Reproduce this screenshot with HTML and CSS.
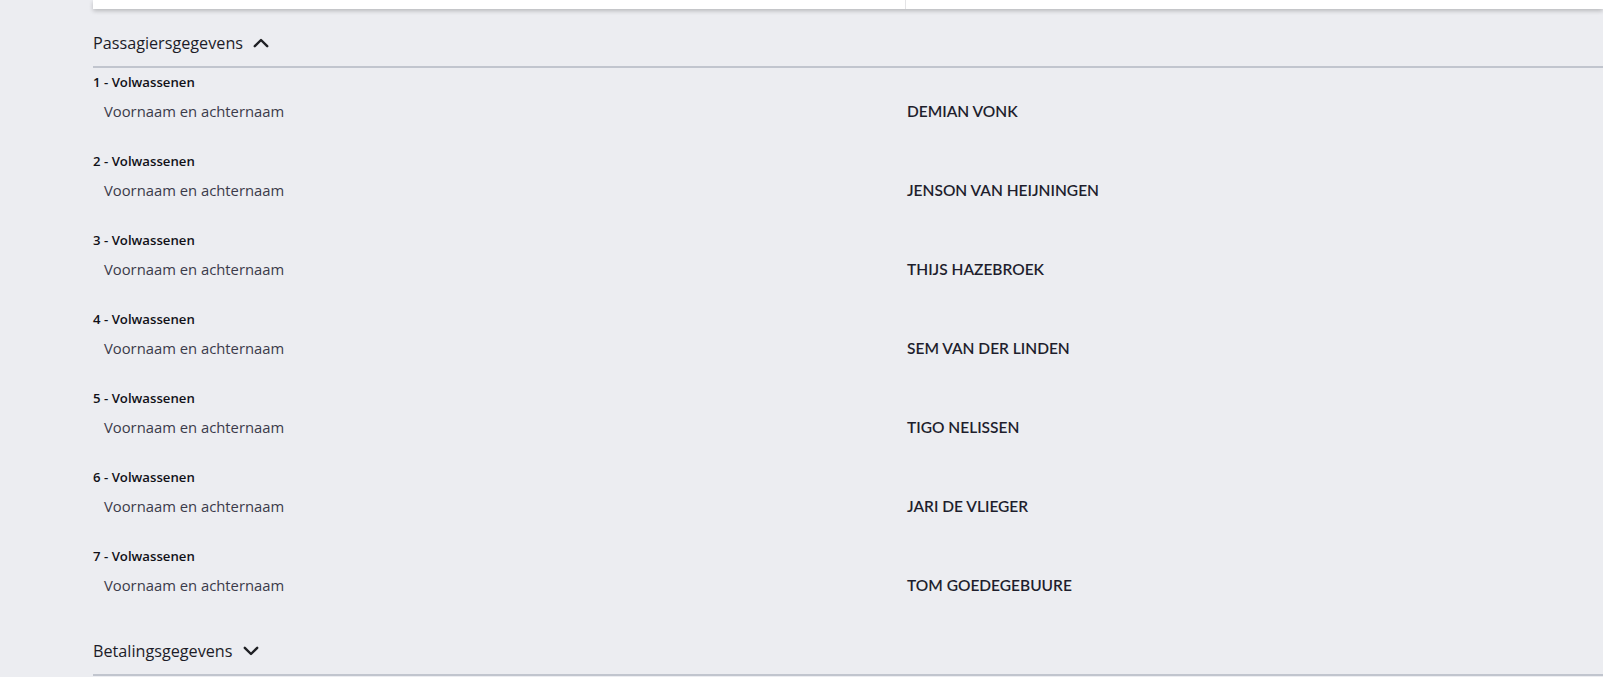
FILE: index.html
```html
<!DOCTYPE html>
<html lang="nl">
<head>
<meta charset="utf-8">
<title>Passagiersgegevens</title>
<link rel="stylesheet" href="styles.css">
</head>
<body>
<div class="page">
  <div class="card">
    <div class="card-cell card-cell-left"></div>
    <div class="card-cell"></div>
  </div>

  <div class="section-header">
    <span class="section-title">Passagiersgegevens</span>
    <svg class="chevron" width="16" height="10" viewBox="0 0 16 10"><polyline points="1.8,8.2 8,2 14.2,8.2" fill="none" stroke="#1f2024" stroke-width="2.4" stroke-linecap="round" stroke-linejoin="round"/></svg>
  </div>

  <div class="passengers">
    <div class="passenger">
      <div class="passenger-title">1 - Volwassenen</div>
      <div class="passenger-row"><span class="label">Voornaam en achternaam</span><span class="value">DEMIAN VONK</span></div>
    </div>
    <div class="passenger">
      <div class="passenger-title">2 - Volwassenen</div>
      <div class="passenger-row"><span class="label">Voornaam en achternaam</span><span class="value">JENSON VAN HEIJNINGEN</span></div>
    </div>
    <div class="passenger">
      <div class="passenger-title">3 - Volwassenen</div>
      <div class="passenger-row"><span class="label">Voornaam en achternaam</span><span class="value">THIJS HAZEBROEK</span></div>
    </div>
    <div class="passenger">
      <div class="passenger-title">4 - Volwassenen</div>
      <div class="passenger-row"><span class="label">Voornaam en achternaam</span><span class="value">SEM VAN DER LINDEN</span></div>
    </div>
    <div class="passenger">
      <div class="passenger-title">5 - Volwassenen</div>
      <div class="passenger-row"><span class="label">Voornaam en achternaam</span><span class="value">TIGO NELISSEN</span></div>
    </div>
    <div class="passenger">
      <div class="passenger-title">6 - Volwassenen</div>
      <div class="passenger-row"><span class="label">Voornaam en achternaam</span><span class="value">JARI DE VLIEGER</span></div>
    </div>
    <div class="passenger">
      <div class="passenger-title">7 - Volwassenen</div>
      <div class="passenger-row"><span class="label">Voornaam en achternaam</span><span class="value">TOM GOEDEGEBUURE</span></div>
    </div>
  </div>

  <div class="section-header section-header-second">
    <span class="section-title">Betalingsgegevens</span>
    <svg class="chevron" width="16" height="10" viewBox="0 0 16 10"><polyline points="1.8,1.8 8,8 14.2,1.8" fill="none" stroke="#1f2024" stroke-width="2.4" stroke-linecap="round" stroke-linejoin="round"/></svg>
  </div>
</div>
</body>
</html>
```

FILE: styles.css
```css
html, body {
  margin: 0;
  padding: 0;
}

body {
  background: #ecedf1;
  font-family: "Open Sans", "Liberation Sans", sans-serif;
  color: #1d1d2b;
  overflow: hidden;
}

.page {
  padding-left: 93px;
}

.card {
  display: grid;
  grid-template-columns: 813px 1fr;
  height: 9px;
  background: #ffffff;
  box-shadow: 0 2px 4px rgba(0, 0, 0, 0.22);
}

.card-cell-left {
  border-right: 1px solid #e4e4e6;
}

.section-header {
  display: flex;
  align-items: center;
  gap: 10px;
  margin-top: 22px;
  height: 24px;
  padding-bottom: 11px;
  border-bottom: 2px solid #c1c5ce;
}

.section-header-second {
  margin-top: 13px;
}

.section-title {
  font-size: 16.2px;
  line-height: 24px;
  color: #1c1c28;
}

.chevron {
  display: block;
}

.passenger {
  padding-top: 5px;
  padding-bottom: 31px;
}

.passengers .passenger + .passenger {
  padding-top: 0;
}

.passenger-title {
  font-size: 13.2px;
  font-weight: 600;
  line-height: 18px;
  color: #111118;
}

.passenger-row {
  display: grid;
  grid-template-columns: 814px 1fr;
  margin-top: 10px;
  line-height: 20px;
}

.label {
  padding-left: 11px;
  font-size: 14.8px;
  color: #3b3b4a;
}

.value {
  font-family: "Lato", "Liberation Sans", sans-serif;
  font-size: 15.5px;
  font-weight: 600;
  color: #1e1e2d;
}
```
